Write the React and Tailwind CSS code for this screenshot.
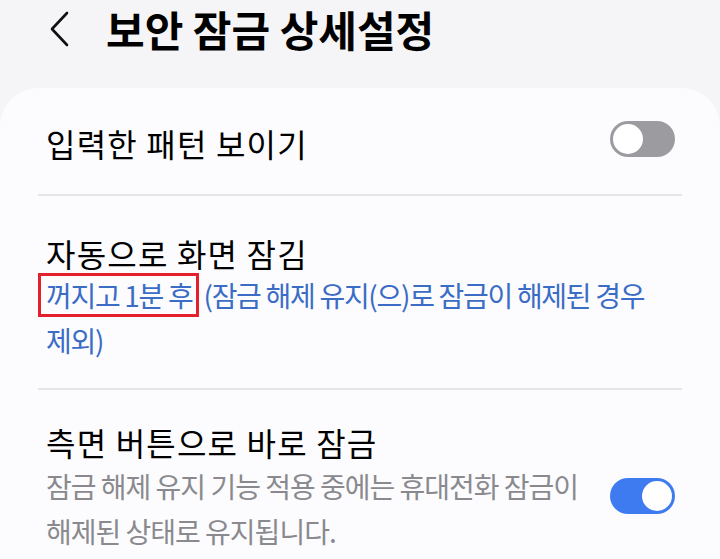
export default function App() {
  const font = { fontFamily: '"Noto Sans CJK KR", "Noto Sans", sans-serif' };
  return (
    <div className="w-[720px] h-[559px] overflow-hidden bg-[#f5f5f7]" style={font}>
      <div className="h-[88px] flex items-start">
        <svg className="ml-[48px] mt-[11px]" width="24" height="36" viewBox="0 0 24 36" fill="none">
          <path d="M19 2 L4 18 L19 34" stroke="#111" strokeWidth="2.6" strokeLinecap="round" strokeLinejoin="round" />
        </svg>
        <div className="ml-[34px] mt-0 text-[42px] leading-[58px] font-bold text-black tracking-[0px]">보안 잠금 상세설정</div>
      </div>
      <div className="bg-[#fcfcfe] rounded-t-[38px] h-[471px]">
        <div className="h-[106px] flex items-center justify-between pl-[46px] pr-[45px]">
          <div className="text-[32px] leading-[40px] text-black tracking-[1.2px] pt-[4px]">입력한 패턴 보이기</div>
          <div className="w-[65px] h-[36px] rounded-full bg-[#9c9ca0] flex items-center pl-[3px] mt-[-4px]">
            <div className="w-[30px] h-[30px] rounded-full bg-white" />
          </div>
        </div>
        <div className="mx-[38px] h-[2px] bg-[#e6e6e8]" />
        <div className="h-[192px] pl-[46px] pr-[45px] pt-[37px]">
          <div className="text-[32px] leading-[40px] text-black tracking-[1.2px]">자동으로 화면 잠김</div>
          <div className="text-[28px] leading-[45px] text-[#3b6cc6] tracking-[-1.3px] break-keep">
            <span className="inline-block border-[3px] border-[#e3202c] pl-[5px] pr-[3px] ml-[-8px] leading-[38px]">꺼지고 1분 후</span> (잠금 해제 유지(으)로 잠금이 해제된 경우 제외)
          </div>
        </div>
        <div className="mx-[38px] h-[2px] bg-[#e6e6e8]" />
        <div className="flex items-center justify-between pl-[46px] pr-[45px] pt-[32px]">
          <div className="w-[540px]">
            <div className="text-[32px] leading-[40px] text-black tracking-[1.2px]">측면 버튼으로 바로 잠금</div>
            <div className="text-[28px] leading-[45px] text-[#8a8a8e] tracking-[-1px] mt-[2px] break-keep">잠금 해제 유지 기능 적용 중에는 휴대전화 잠금이 해제된 상태로 유지됩니다.</div>
          </div>
          <div className="w-[65px] h-[36px] rounded-full bg-[#3e7bf0] flex items-center justify-end pr-[3px] mt-[16px]">
            <div className="w-[30px] h-[30px] rounded-full bg-white" />
          </div>
        </div>
      </div>
    </div>
  );
}
